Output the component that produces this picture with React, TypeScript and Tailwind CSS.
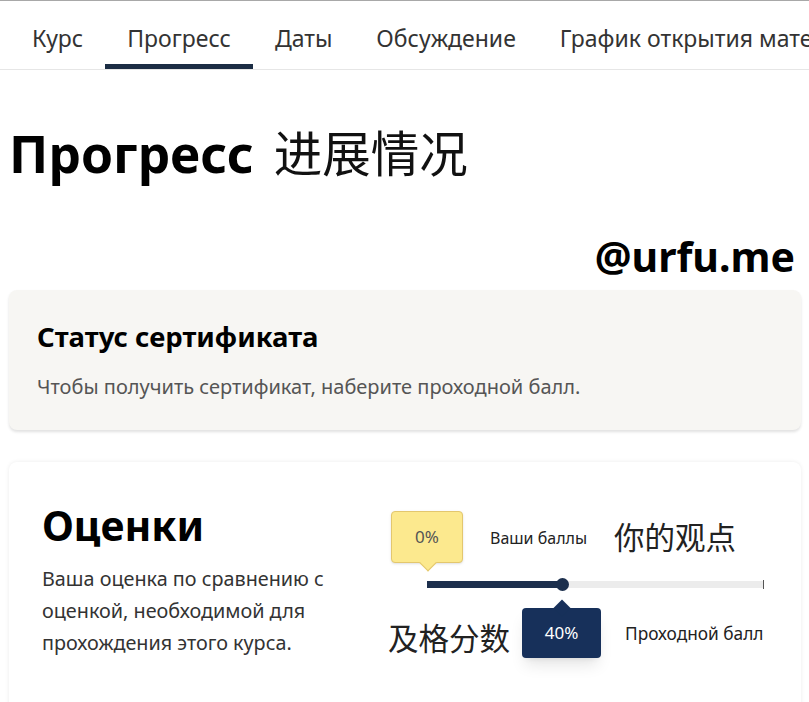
import React from 'react'

const tabs = ['Курс', 'Прогресс', 'Даты', 'Обсуждение', 'График открытия материалов']

const font = { fontFamily: '"Noto Sans", "Noto Sans CJK SC", sans-serif' }

function Tabs() {
  return (
    <nav className="flex h-[70px] border-t border-b border-t-[#a8a8a8] border-b-[#e6e6e6] pl-[10px] overflow-hidden whitespace-nowrap">
      {tabs.map((t, i) => (
        <div
          key={t}
          className={
            'flex items-center px-[22px] text-[23px] text-[#333] ' +
            (i === 1 ? 'border-b-[5px] border-[#1c2d44] pt-[11px]' : 'pt-[6px]')
          }
        >
          {t}
        </div>
      ))}
    </nav>
  )
}

function GradeChart() {
  return (
    <div className="flex flex-col pt-[49px]">
      <div className="flex items-start h-[62px]">
        <div className="relative ml-[3px] w-[72px] h-[52px] rounded-[4px] bg-[#fce98e] border border-[#e3c76e] shadow-sm flex items-center justify-center text-[17px] text-[#555]">
          0%
          <span className="absolute -bottom-[7px] left-[30px] w-[12px] h-[12px] rotate-45 bg-[#fce98e] border-r border-b border-[#e3c76e]" />
        </div>
        <div className="ml-[27px] mt-[15px] text-[16px] text-[#222]">Ваши баллы</div>
        <div className="ml-[27px] mt-[6px] text-[30.5px] leading-[40px] text-[#222]">你的观点</div>
      </div>
      <div className="ml-[39px] mt-[8px] relative w-[337px] h-[7px] bg-[#ececec]">
        <div className="h-full w-[135px] bg-[#1c2f4d]" />
        <span className="absolute left-[129px] -top-[3px] w-[13px] h-[13px] rounded-full bg-[#1c2f4d]" />
        <span className="absolute right-0 -top-[1px] w-px h-[9px] bg-[#555]" />
      </div>
      <div className="flex items-start mt-[20px]">
        <div className="mt-[10px] text-[30.5px] leading-[40px] text-[#222]">及格分数</div>
        <div className="relative ml-[12px] w-[79px] h-[50px] rounded-[4px] bg-[#17305a] shadow-lg flex items-center justify-center text-[17px] text-white">
          40%
          <span className="absolute -top-[6px] left-[34px] w-[12px] h-[12px] rotate-45 bg-[#17305a]" />
        </div>
        <div className="ml-[24px] mt-[13px] text-[17.3px] text-[#222]">Проходной балл</div>
      </div>
    </div>
  )
}

export default function App() {
  return (
    <div className="w-[809px] h-[702px] bg-white overflow-hidden" style={font}>
      <Tabs />
      <div className="px-[9px]">
        <div className="flex items-end pt-[51px]">
          <h1 className="text-[51.5px] font-bold leading-[64px] text-black">Прогресс</h1>
          <span className="ml-[20px] text-[48.5px] leading-[64px] text-[#111]">进展情况</span>
        </div>
        <div className="flex justify-end pr-[5px] mt-[44px] h-[54px]">
          <span className="text-[41px] font-bold leading-[54px] text-black">@urfu.me</span>
        </div>
        <section className="mt-[7px] -mr-[1px] h-[140px] rounded-[8px] bg-[#f7f6f3] shadow-[0_2px_3px_rgba(0,0,0,0.12)] px-[28px] pt-[28px]">
          <h2 className="text-[27.5px] font-bold leading-[38px] text-black">Статус сертификата</h2>
          <p className="mt-[17px] text-[20px] leading-[28px] text-[#555]">
            Чтобы получить сертификат, наберите проходной балл.
          </p>
        </section>
        <section className="mt-[32px] -mr-[1px] h-[260px] rounded-[8px] bg-white shadow-[0_0_4px_rgba(0,0,0,0.08)] flex pl-[33px]">
          <div className="w-[346px] pt-[36px]">
            <h2 className="text-[41px] font-bold leading-[54px] text-black">Оценки</h2>
            <p className="mt-[11px] max-w-[300px] text-[19.8px] leading-[32px] text-[#333]">
              Ваша оценка по сравнению с оценкой, необходимой для прохождения этого курса.
            </p>
          </div>
          <GradeChart />
        </section>
      </div>
    </div>
  )
}
